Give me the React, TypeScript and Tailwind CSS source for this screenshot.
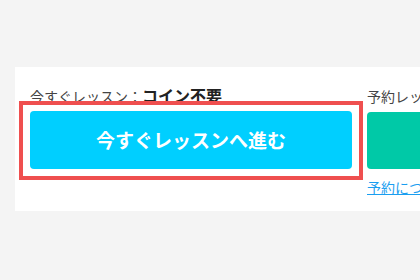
export default function App() {
  return (
    <div className="h-[280px] w-[420px] overflow-hidden bg-[#f4f4f4] pl-[15px] pt-[67px] font-['Noto_Sans_CJK_JP',sans-serif]">
      <section className="flex h-[144px] w-[720px] gap-[15px] bg-white pl-[15px] pt-[18px]">
        <div className="w-[322px]">
          <p className="h-[20px] text-[14px] leading-[20px] text-[#444]">
            今すぐレッスン：<span className="text-[16px] font-bold text-[#222]">コイン不要</span>
          </p>
          <div className="relative mt-[6px]">
            {/* highlight frame drawn over the label */}
            <div className="absolute -bottom-[11px] -left-[11px] -right-[11px] -top-[10px] border-4 border-[#ef4f4f] bg-white" />
            <button
              type="button"
              className="relative flex h-[58px] w-full items-center justify-center rounded-[4px] bg-[#00cfff] text-[19px] font-bold text-white"
            >
              今すぐレッスンへ進む
            </button>
          </div>
        </div>

        <div className="w-[322px]">
          <p className="h-[20px] text-[14px] leading-[20px] text-[#444]">
            予約レッスン：<span className="text-[16px] font-bold text-[#222]">コイン使用</span>
          </p>
          <button
            type="button"
            className="mt-[7px] flex h-[57px] w-full items-center justify-center rounded-[4px] bg-[#00c9a7] text-[19px] font-bold text-white"
          >
            予約レッスンへ進む
          </button>
          <a className="mt-[8px] block text-[14px] leading-[20px] text-[#1a9ef0] underline" href="#">
            予約について
          </a>
        </div>
      </section>
    </div>
  );
}
